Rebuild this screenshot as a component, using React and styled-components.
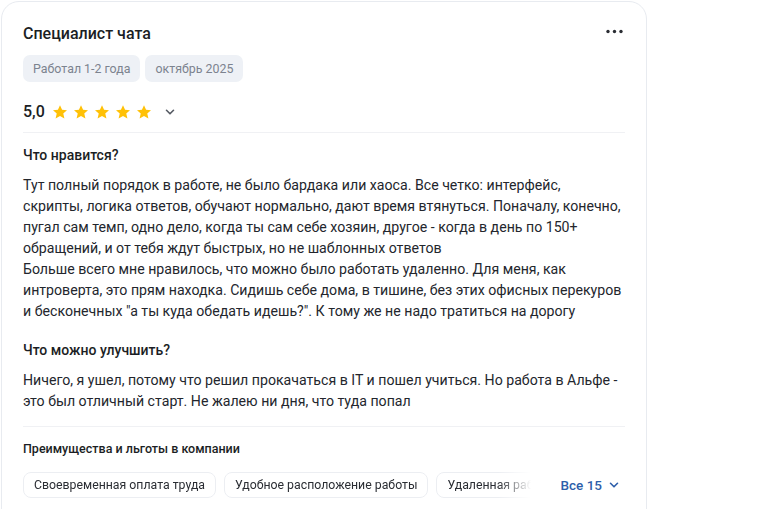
import React from "react";
import styled, { createGlobalStyle } from "styled-components";

const Global = createGlobalStyle`
  html, body { margin: 0; padding: 0; background: #fff; }
  body { font-family: Roboto, "Noto Sans", Arial, sans-serif; color: #1f2229; -webkit-font-smoothing: antialiased; }
  * { box-sizing: border-box; }
`;

const Card = styled.div`
  margin: 1px 0 0 1px;
  width: 646px;
  height: 560px;
  border: 1px solid #e8ebf0;
  border-radius: 18px;
  background: #fff;
  padding: 22px 21px 0 21px;
`;

const TitleRow = styled.div`
  display: flex;
  align-items: center;
  justify-content: space-between;
  height: 20px;
`;

const Title = styled.h2`
  margin: 0;
  font-size: 16px;
  line-height: 20px;
  font-weight: 500;
  color: #1b1e24;
`;

const MoreBtn = styled.button`
  border: 0;
  background: none;
  padding: 0;
  width: 24px;
  height: 20px;
  display: flex;
  align-items: flex-start;
  justify-content: flex-end;
  padding-top: 5px;
  margin-right: 2px;
  cursor: pointer;
`;

const Tags = styled.div`
  display: flex;
  gap: 5px;
  margin-top: 11px;
`;

const Tag = styled.span`
  display: inline-block;
  background: #eef1f6;
  color: #7c838f;
  font-size: 12.4px;
  line-height: 17px;
  padding: 5px 10px;
  border-radius: 7px;
`;

const RatingRow = styled.div`
  display: flex;
  align-items: center;
  height: 20px;
  margin-top: 20px;
`;

const Score = styled.span`
  font-size: 16px;
  font-weight: 500;
  line-height: 20px;
  margin-right: 7px;
  color: #1b1e24;
`;

const Stars = styled.div`
  display: flex;
  gap: 5px;
  margin-right: 12px;
`;

const Divider = styled.div`
  height: 1px;
  background: #f0f1f4;
  margin-top: ${(p) => p.$mt}px;
`;

const Heading = styled.h3`
  margin: ${(p) => p.$mt}px 0 0;
  font-size: 14px;
  line-height: 20px;
  font-weight: 500;
  color: #1b1e24;
`;

const Para = styled.p`
  margin: 10px 0 0;
  font-size: 14.15px;
  line-height: 21px;
  color: #23262d;
  white-space: pre-line;
`;

const SubHeading = styled.h4`
  margin: 13px 0 0;
  font-size: 12.5px;
  line-height: 18px;
  font-weight: 500;
  color: #1b1e24;
`;

const BenefitsRow = styled.div`
  display: flex;
  align-items: center;
  margin-top: 14px;
`;

const BenefitsList = styled.div`
  display: flex;
  gap: 8px;
  width: 508px;
  overflow: hidden;
  -webkit-mask-image: linear-gradient(to right, #000 475px, transparent 508px);
  mask-image: linear-gradient(to right, #000 475px, transparent 508px);
`;

const Benefit = styled.span`
  flex: none;
  border: 1px solid #eceef2;
  border-radius: 8px;
  padding: 4px 10px;
  font-size: 12.3px;
  line-height: 16px;
  color: #2a2d33;
  white-space: nowrap;
`;

const AllBtn = styled.button`
  margin-left: auto;
  margin-right: 5px;
  border: 0;
  background: none;
  padding: 0;
  display: flex;
  align-items: center;
  gap: 6px;
  font-family: inherit;
  font-size: 13.5px;
  font-weight: 500;
  color: #2d5eaa;
  cursor: pointer;
`;

const Star = () => (
  <svg width="16" height="16" viewBox="0 0 24 24">
    <path
      fill="#FFC107"
      d="M12 1.8l3.1 6.9 7.4.7-5.6 5 1.7 7.4L12 17.9l-6.6 3.9 1.7-7.4-5.6-5 7.4-.7z"
    />
  </svg>
);

const Chevron = ({ color = "#555a63", size = 12 }) => (
  <svg width={size} height={size} viewBox="0 0 12 12" fill="none">
    <path d="M2.5 4.3L6 7.8l3.5-3.5" stroke={color} strokeWidth="1.6" strokeLinecap="round" strokeLinejoin="round" />
  </svg>
);

const Dots = () => (
  <svg width="17" height="5" viewBox="0 0 17 5">
    <circle cx="2" cy="2.5" r="1.7" fill="#2a2d33" />
    <circle cx="8.5" cy="2.5" r="1.7" fill="#2a2d33" />
    <circle cx="15" cy="2.5" r="1.7" fill="#2a2d33" />
  </svg>
);

const likes = [
  "Тут полный порядок в работе, не было бардака или хаоса. Все четко: интерфейс,",
  "скрипты, логика ответов, обучают нормально, дают время втянуться. Поначалу, конечно,",
  "пугал сам темп, одно дело, когда ты сам себе хозяин, другое - когда в день по 150+",
  "обращений, и от тебя ждут быстрых, но не шаблонных ответов",
  "Больше всего мне нравилось, что можно было работать удаленно. Для меня, как",
  "интроверта, это прям находка. Сидишь себе дома, в тишине, без этих офисных перекуров",
  "и бесконечных \"а ты куда обедать идешь?\". К тому же не надо тратиться на дорогу",
].join("\n");

const improve = [
  "Ничего, я ушел, потому что решил прокачаться в IT и пошел учиться. Но работа в Альфе -",
  "это был отличный старт. Не жалею ни дня, что туда попал",
].join("\n");

export default function App() {
  return (
    <>
      <Global />
      <Card>
        <TitleRow>
          <Title>Специалист чата</Title>
          <MoreBtn aria-label="Ещё">
            <Dots />
          </MoreBtn>
        </TitleRow>
        <Tags>
          <Tag>Работал 1-2 года</Tag>
          <Tag>октябрь 2025</Tag>
        </Tags>
        <RatingRow>
          <Score>5,0</Score>
          <Stars>
            {[0, 1, 2, 3, 4].map((i) => (
              <Star key={i} />
            ))}
          </Stars>
          <Chevron />
        </RatingRow>
        <Divider $mt={10} />
        <Heading $mt={12}>Что нравится?</Heading>
        <Para>{likes}</Para>
        <Heading $mt={18}>Что можно улучшить?</Heading>
        <Para>{improve}</Para>
        <Divider $mt={14} />
        <SubHeading>Преимущества и льготы в компании</SubHeading>
        <BenefitsRow>
          <BenefitsList>
            <Benefit>Своевременная оплата труда</Benefit>
            <Benefit>Удобное расположение работы</Benefit>
            <Benefit>Удаленная работа</Benefit>
          </BenefitsList>
          <AllBtn>
            Все 15
            <Chevron color="#2d5eaa" />
          </AllBtn>
        </BenefitsRow>
      </Card>
    </>
  );
}
